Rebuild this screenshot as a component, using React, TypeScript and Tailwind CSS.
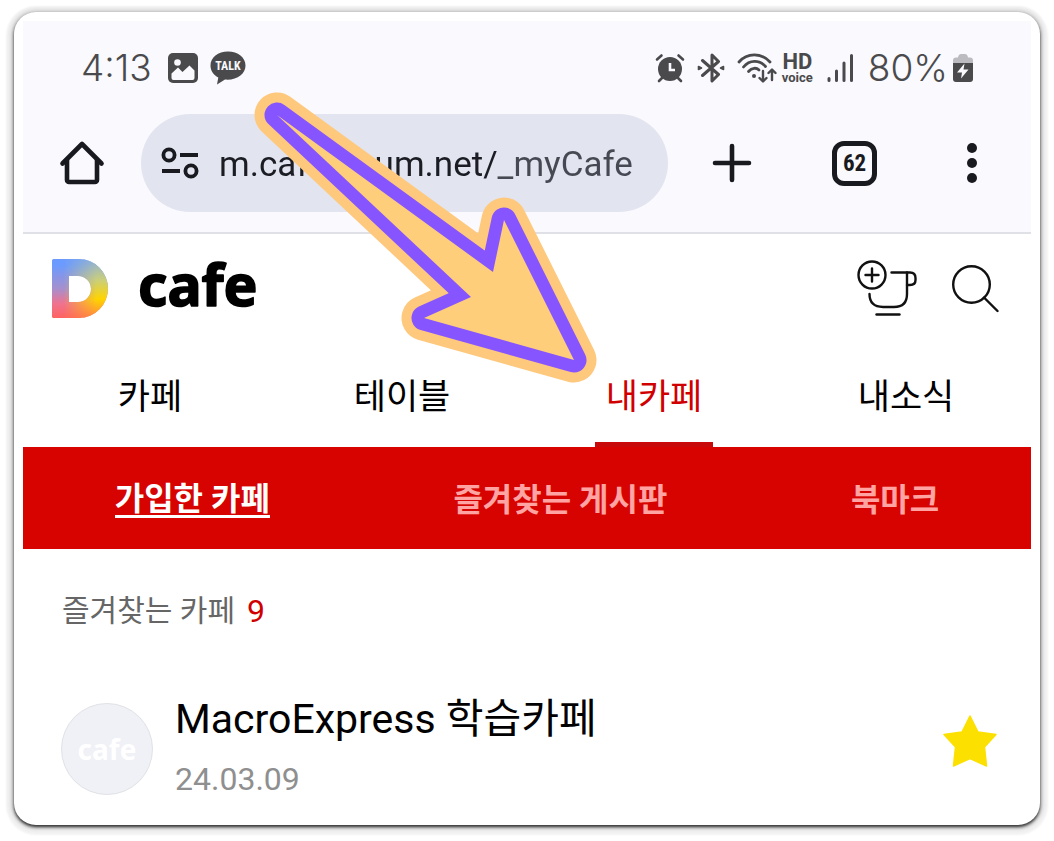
import React from "react";

const tabs = [
  { id: "cafe", label: "카페" },
  { id: "table", label: "테이블" },
  { id: "my", label: "내카페" },
  { id: "news", label: "내소식" },
];

const subTabs = [
  { id: "joined", label: "가입한 카페" },
  { id: "boards", label: "즐겨찾는 게시판" },
  { id: "bookmark", label: "북마크" },
];

const cafes = [{ id: 1, name: "MacroExpress 학습카페", date: "24.03.09" }];

const StatusBar = () => (
  <div className="flex h-[93px] items-center justify-between pr-[57px] pl-[58px] text-[#4a4a4c]">
    <div className="flex items-center">
      <span className="font-[Inter,sans-serif] text-[37px] leading-none font-light">4:13</span>
      <svg className="ml-4 h-[30px] w-[30px]" viewBox="0 0 30 30">
        <rect width="30" height="30" rx="5" fill="currentColor" />
        <circle cx="9.500" cy="9.500" r="3.300" fill="#f9f9fe" />
        <path
          d="M3.500 20.500 L10 14.500 L14.500 19 L21.500 12.500 L26.500 17.500 V25 a2 2 0 0 1 -2 2 H5.500 a2 2 0 0 1 -2 -2 Z"
          fill="#f9f9fe"
        />
      </svg>
      <svg className="ml-3 h-[34px] w-[36px]" viewBox="0 0 36 34">
        <path
          d="M18 0.500 C8 0.500 0.500 6.500 0.500 14.500 C0.500 19.800 3.500 24 8.300 26.500 L7 33.500 L15 28.600 C27 29.500 35.500 23 35.500 14.500 C35.500 6.500 28 0.500 18 0.500 Z"
          fill="currentColor"
        />
        <text x="18" y="19" textAnchor="middle" fontFamily="'Roboto Condensed', Roboto, sans-serif" fontSize="12" fontWeight="700" fill="#f9f9fe">
          TALK
        </text>
      </svg>
    </div>

    <div className="flex items-center">
      <svg className="h-[30px] w-[30px]" viewBox="0 0 30 30" fill="none" stroke="currentColor" strokeLinecap="round">
        <circle cx="15" cy="16" r="12" fill="currentColor" stroke="none" />
        <path d="M2 6.500 L6.500 2.500 M28 6.500 L23.500 2.500 M7 25 L4 28 M23 25 L26 28" strokeWidth="2.600" />
        <path d="M15 10 V17 H20" stroke="#f9f9fe" strokeWidth="2.600" strokeLinecap="butt" />
      </svg>
      <svg className="ml-3 h-[30px] w-[28px]" viewBox="0 0 28 30" fill="none" stroke="currentColor" strokeWidth="3" strokeLinejoin="round" strokeLinecap="round">
        <path d="M5.500 7.500 L21.500 21.500 L15 28 V2 L21.500 8.500 L5.500 22.500" />
        <path d="M1.500 13.500 L4.500 15 L1.500 16.500 Z M26.500 13.500 L23.500 15 L26.500 16.500 Z" strokeWidth="1.600" fill="currentColor" />
      </svg>
      <svg className="ml-3 h-[30px] w-[40px]" viewBox="0 0 40 30" fill="none" stroke="currentColor" strokeWidth="2.800" strokeLinecap="round" strokeLinejoin="round">
        <path d="M2 9 C10 -0.500 24.500 -0.500 33 9" />
        <path d="M6.500 14 C12.500 6.500 22.500 6.500 28.500 13.500" />
        <path d="M11.500 18.500 C15 14.500 19.500 14.500 22 17" />
        <circle cx="17" cy="23" r="2" fill="currentColor" stroke="none" />
        <path d="M26 18 V28 M22.500 25 L26 28.500 L29.500 25 M35 27 V17 M31.500 20 L35 16.500 L38.500 20" strokeWidth="2.400" />
      </svg>
      <span className="ml-[5px] flex flex-col items-center font-[Roboto,sans-serif] font-bold">
        <span className="text-[22px] leading-[20px]">HD</span>
        <span className="text-[13px] leading-[12px]">voice</span>
      </span>
      <svg className="ml-3.5 h-[30px] w-[27px]" viewBox="0 0 27 30" fill="none" stroke="currentColor" strokeWidth="3" strokeLinecap="round">
        <path d="M2 25.500 V27.500 M9.500 18 V27.500 M17 10 V27.500 M24.500 2.500 V27.500" />
      </svg>
      <span className="ml-3.5 font-[Inter,sans-serif] text-[37px] leading-none font-light">80%</span>
      <svg className="ml-1 h-[30px] w-[22px]" viewBox="0 0 22 30">
        <path d="M1 11 V7.500 Q1 4.500 4 4.500 H6 Q6.500 1 9 1 H13 Q15.500 1 16 4.500 H18 Q21 4.500 21 7.500 V11 Z" fill="#bcbcc0" />
        <path d="M1 10 H21 V26 a3 3 0 0 1 -3 3 H4 a3 3 0 0 1 -3 -3 Z" fill="currentColor" />
        <path d="M12.500 10.500 L5 19.500 H10 L9 25.500 L16.500 16.500 H11.500 Z" fill="#f9f9fe" />
      </svg>
    </div>
  </div>
);

const Toolbar = () => (
  <div className="flex items-center pr-11 pb-5 pl-9 text-[#191a20]">
    <button aria-label="Home">
      <svg className="h-[46px] w-[46px]" viewBox="0 0 46 46" fill="none" stroke="currentColor" strokeWidth="4.600" strokeLinecap="round" strokeLinejoin="round">
        <path d="M3.500 23.500 L23 4 L42.500 23.500" />
        <path d="M8 20 V40 a2 2 0 0 0 2 2 H36 a2 2 0 0 0 2 -2 V20" />
      </svg>
    </button>
    <div className="ml-9 flex h-[98px] min-w-0 flex-1 items-center rounded-full bg-[#e2e5f0] pr-6 pl-5">
      <svg className="h-[32px] w-[38px] shrink-0" viewBox="0 0 38 32" fill="none" stroke="currentColor" strokeWidth="3.800">
        <circle cx="8" cy="8" r="5.600" />
        <circle cx="30" cy="24" r="5.600" />
        <path d="M19 8 H37 M1 24 H19" />
      </svg>
      <input
        aria-label="Address"
        readOnly
        value="m.cafe.daum.net/_myCafe"
        className="ml-5 w-full min-w-0 bg-[linear-gradient(to_right,#1c1d24_278px,#464852_278px)] bg-clip-text pt-1 font-[Roboto,sans-serif] text-[35px] leading-[48px] text-transparent outline-none"
      />
    </div>
    <button aria-label="New tab" className="ml-11">
      <svg className="h-[40px] w-[40px]" viewBox="0 0 40 40" stroke="currentColor" strokeWidth="4.600" strokeLinecap="round">
        <path d="M20 3 V37 M3 20 H37" />
      </svg>
    </button>
    <button
      aria-label="62 open tabs"
      className="ml-20 h-[45px] w-[45px] rounded-xl border-[5px] border-current font-['Roboto_Condensed',Roboto,sans-serif] text-[23px] leading-none font-bold"
    >
      62
    </button>
    <button aria-label="Menu" className="ml-20 px-[10px]">
      <svg className="h-[40px] w-[10px]" viewBox="0 0 10 40" fill="currentColor">
        <circle cx="5" cy="5" r="5" />
        <circle cx="5" cy="20" r="5" />
        <circle cx="5" cy="35" r="5" />
      </svg>
    </button>
  </div>
);

const CafeHeader = () => (
  <header className="flex h-[108px] items-center justify-between pr-8 pl-[29px]">
    <a href="#" className="flex items-center gap-7 text-black">
      <svg className="h-[59px] w-[56px]" viewBox="0 0 56 59" role="img" aria-label="Daum">
        <defs>
          <linearGradient id="left" x1="0" y1="0" x2="0" y2="1">
            <stop offset="0.100" stopColor="#6b9bff" />
            <stop offset="0.500" stopColor="#a58fce" />
            <stop offset="0.750" stopColor="#ee7391" />
            <stop offset="1" stopColor="#ff6360" />
          </linearGradient>
          <linearGradient id="right" x1="0" y1="0" x2="0" y2="1">
            <stop offset="0" stopColor="#8fb0d8" />
            <stop offset="0.350" stopColor="#c9cf7c" />
            <stop offset="0.680" stopColor="#ffd400" />
            <stop offset="1" stopColor="#ff8a3c" />
          </linearGradient>
          <linearGradient id="fade" x1="0" y1="0" x2="1" y2="0">
            <stop offset="0.200" stopColor="#000" />
            <stop offset="0.800" stopColor="#fff" />
          </linearGradient>
          <mask id="blend">
            <rect width="56" height="59" fill="url(#fade)" />
          </mask>
        </defs>
        <path
          d="M1.500 0 H27 a29 29.500 0 0 1 0 59 H1.500 a1.500 1.500 0 0 1 -1.500 -1.500 V1.500 a1.500 1.500 0 0 1 1.500 -1.500 Z M17 17 V43 H26 a13 13 0 0 0 0 -26 Z"
          fill="url(#left)"
          fillRule="evenodd"
        />
        <path
          d="M1.500 0 H27 a29 29.500 0 0 1 0 59 H1.500 a1.500 1.500 0 0 1 -1.500 -1.500 V1.500 a1.500 1.500 0 0 1 1.500 -1.500 Z M17 17 V43 H26 a13 13 0 0 0 0 -26 Z"
          fill="url(#right)"
          fillRule="evenodd"
          mask="url(#blend)"
        />
      </svg>
      <svg className="h-[96px] w-[136px]" viewBox="0 0 136 96">
        <text
          x="2"
          y="66"
          fontFamily="'Noto Sans', sans-serif"
          fontSize="57"
          fontWeight="700"
          fill="#000"
          stroke="#000"
          strokeWidth="1.600"
          strokeLinejoin="round"
        >
          cafe
        </text>
      </svg>
    </a>
    <div className="flex items-center gap-[34px]">
      <button aria-label="카페 만들기">
        <svg className="h-[58px] w-[60px]" viewBox="0 0 60 58" fill="none" stroke="#111" strokeWidth="2.400" strokeLinecap="round" strokeLinejoin="round">
          <circle cx="15" cy="16" r="13.500" />
          <path d="M15 9.500 V22.500 M8.500 16 H21.500" />
          <path d="M34.500 13.500 H53 Q58.500 13.500 58.500 19 V21 Q58.500 26 53 26 H50" />
          <path d="M50 13.500 V35 Q50 48 37 48 H26 Q12.500 48 12.500 35" />
          <path d="M19.500 55.500 H42.500" />
        </svg>
      </button>
      <button aria-label="검색">
        <svg className="h-[50px] w-[48px]" viewBox="0 0 48 50" fill="none" stroke="#111" strokeWidth="2.400" strokeLinecap="round">
          <circle cx="20.500" cy="21.500" r="18.300" />
          <path d="M33 34.500 L46.500 48" />
        </svg>
      </button>
    </div>
  </header>
);

const Arrow = () => (
  <svg
    className="pointer-events-none absolute top-[78px] left-[236px] h-[310px] w-[370px]"
    viewBox="250 90 370 310"
    strokeLinejoin="round"
    aria-hidden="true"
  >
    <path d="M277 115 L493 272 L504 220 L574 360 L424 318 L471 297 Z" fill="#fec87d" stroke="#fec87d" strokeWidth="45" />
    <path d="M277 115 L493 272 L504 220 L574 360 L424 318 L471 297 Z" fill="#8655ff" stroke="#8655ff" strokeWidth="25" />
    <path d="M277 115 L493 272 L504 220 L574 360 L424 318 L471 297 Z" fill="#ffce7a" />
  </svg>
);

const App = () => {
  return (
    <div className="bg-white px-[14px] pt-3 pb-4 font-[Roboto,'Noto_Sans_CJK_KR',sans-serif]">
      <div className="relative rounded-[22px] bg-white px-[9px] pt-[9px] pb-[14px] shadow-[0_2px_3px_#333,0_1px_5px_2px_#bbb,0_2px_2px_8px_#f3f3f3]">
        <div className="border-b-2 border-[#dfe1e6] bg-[#f9f9fe]">
          <StatusBar />
          <Toolbar />
        </div>

        <CafeHeader />

        <nav className="grid h-[105px] grid-cols-4 text-[35px]">
          {tabs.map(t => (
            <a
              key={t.id}
              href={`#${t.id}`}
              className={`relative flex items-center justify-center pt-2 pl-0.5 ${t.id === "my" ? "text-[#d00000]" : "text-black"}`}
            >
              {t.label}
              {t.id === "my" && <span className="absolute bottom-0 h-[5px] w-[118px] bg-[#c90a0a]" />}
            </a>
          ))}
        </nav>

        <nav className="flex h-[102px] items-center justify-around bg-[#d60300] pt-1 text-[32px] font-bold">
          {subTabs.map(t => (
            <a
              key={t.id}
              href={`#${t.id}`}
              className={t.id === "joined" ? "border-b-[3px] border-white leading-[32px] text-white" : "leading-[36px] text-[#ffa3a3]"}
            >
              {t.label}
            </a>
          ))}
        </nav>

        <main className="pr-[34px] pl-[38px] pt-[38px]">
          <h2 className="flex items-center gap-3 pl-px text-[30px] leading-[48px] text-[#666]">
            즐겨찾는 카페 <span className="text-[32px] text-[#d00000]">9</span>
          </h2>
          <ul className="mt-[52px]">
            {cafes.map(c => (
              <li key={c.id} className="flex items-center">
                <span className="flex h-[92px] w-[92px] items-center justify-center rounded-full border border-[#e0e2e6] bg-[#eff1f6] font-['Noto_Sans',sans-serif] text-[28px] font-bold text-white">
                  cafe
                </span>
                <div className="ml-[22px] flex-1 pt-1">
                  <a href="#" className="block text-[41px] leading-[56px] text-black">{c.name}</a>
                  <p className="text-[32px] leading-[64px] text-[#8f8f8f]">{c.date}</p>
                </div>
                <button aria-label="즐겨찾기" className="pb-4">
                  <svg className="h-[54px] w-[54px]" viewBox="0 0 54 54" fill="#fbe000" stroke="#fbe000" strokeWidth="1.500" strokeLinejoin="round">
                    <path d="M27 2 L35 18 L53 20.500 L41.500 33 L43.500 52 L27 44.500 L10.500 52 L12.500 33 L1 20.500 L19 18 Z" />
                  </svg>
                </button>
              </li>
            ))}
          </ul>
        </main>

        <Arrow />
      </div>
    </div>
  );
};

export default App;
